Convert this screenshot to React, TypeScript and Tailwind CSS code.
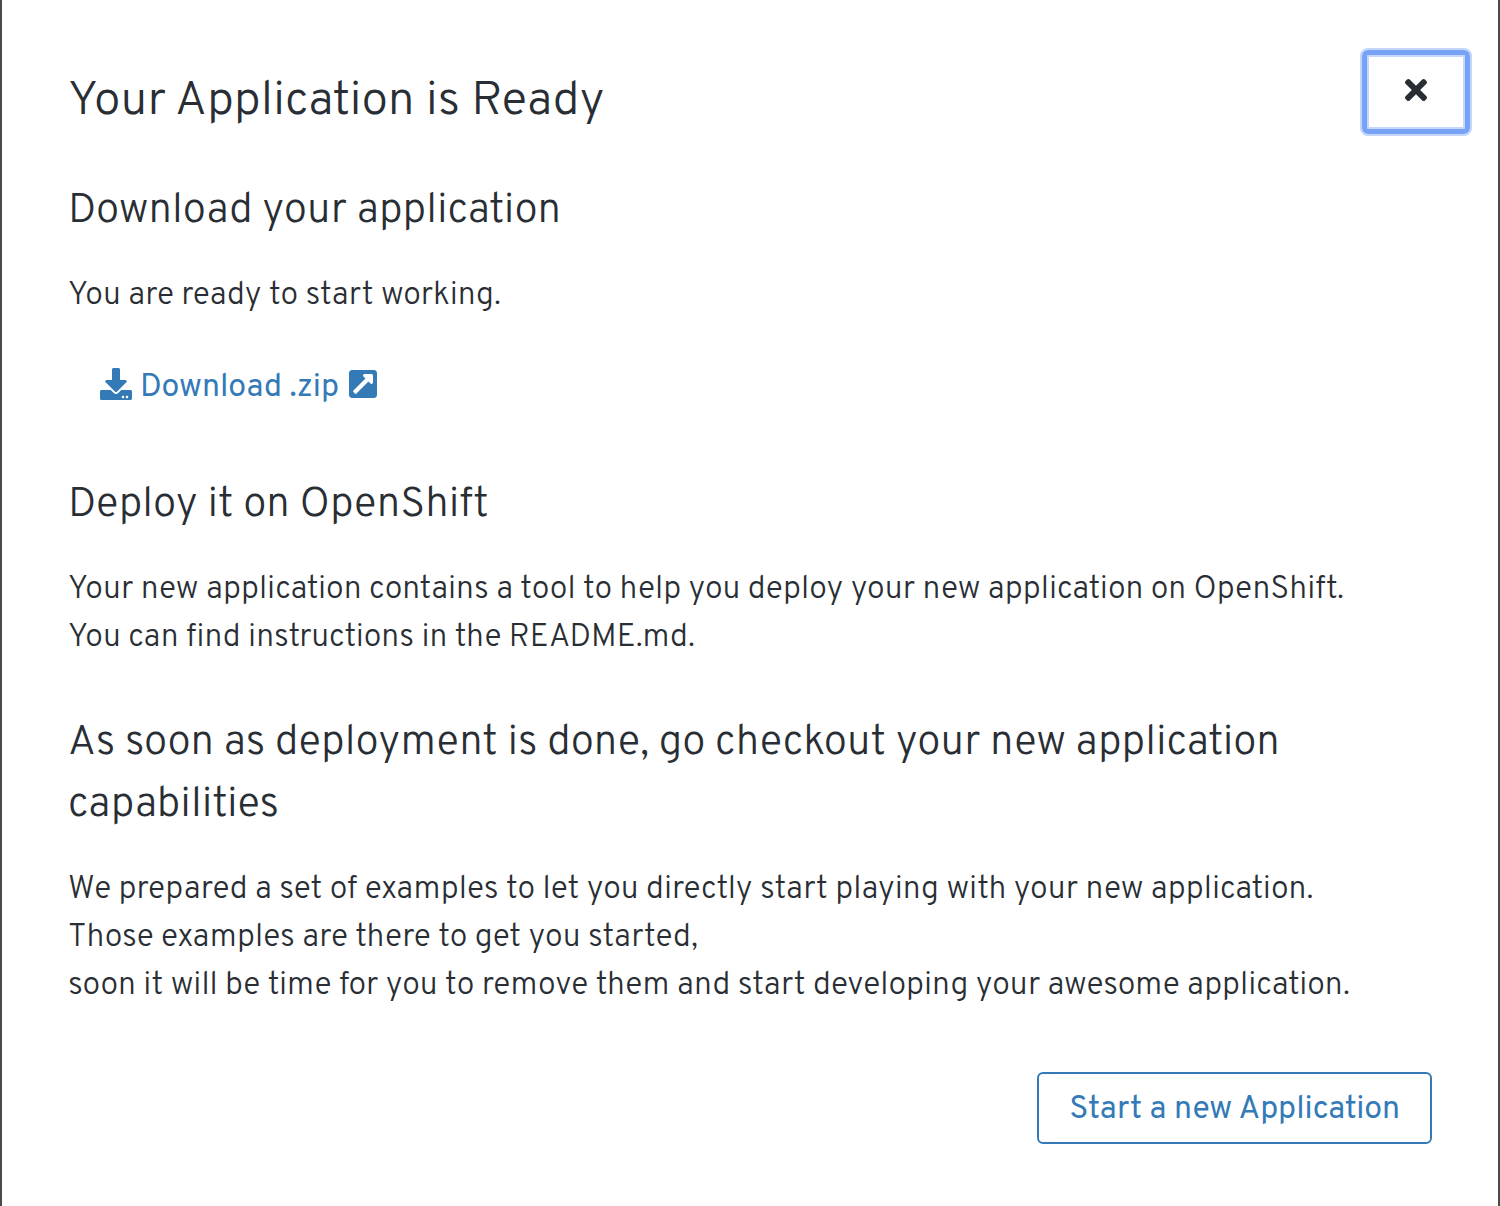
import type { ReactNode } from "react";
import { FaDownload, FaExternalLinkSquareAlt, FaTimes } from "react-icons/fa";

function Section({ title, children }: { title: string; children: ReactNode }) {
  return (
    <section>
      <h2 className="mb-[29px] text-[42px] leading-[62px]">{title}</h2>
      {children}
    </section>
  );
}

export default function App() {
  return (
    <div className="min-h-screen border-x-2 border-[#4a4a4c] bg-white font-['Overpass','Open_Sans',sans-serif] text-[32px] leading-[48px] font-light text-[#292e34]">
      <main role="dialog" aria-labelledby="dialog-title" className="px-[66px] pt-[50px] pb-[62px]">
        <header className="-mr-[38px] flex items-start justify-between">
          <h1 id="dialog-title" className="pt-4 text-5xl leading-[72px]">
            Your Application is Ready
          </h1>
          <button
            type="button"
            aria-label="Close"
            className="flex h-[84px] w-[108px] items-center justify-center rounded-md border-5 border-[#76a2f7] pb-1 shadow-[0_0_0_2px_#c5d6fb,inset_0_0_0_2px_#c5d6fb]"
          >
            <FaTimes size={32} />
          </button>
        </header>

        <div className="mt-[43px]">
          <Section title="Download your application">
            <p>You are ready to start working.</p>
            <a href="#" className="mt-11 ml-8 flex w-fit items-center gap-2 font-normal text-[#337ab7]">
              <FaDownload size={32} className="mb-2" />
              Download .zip
              <FaExternalLinkSquareAlt size={32} className="mb-2" />
            </a>
          </Section>
        </div>

        <div className="mt-[63px]">
          <Section title="Deploy it on OpenShift">
            <p>
              Your new application contains a tool to help you deploy your new application on OpenShift.
              <br />
              You can find instructions in the README.md.
            </p>
          </Section>
        </div>

        <div className="mt-[51px]">
          <Section title="As soon as deployment is done, go checkout your new application capabilities">
            <p>
              We prepared a set of examples to let you directly start playing with your new application.
              <br />
              Those examples are there to get you started,
              <br />
              soon it will be time for you to remove them and start developing your awesome application.
            </p>
          </Section>
        </div>

        <footer className="mt-[62px] flex justify-end">
          <button
            type="button"
            className="h-[72px] rounded-md border-2 border-[#337ab7] px-[30px] pt-1 font-normal text-[#337ab7]"
          >
            Start a new Application
          </button>
        </footer>
      </main>
    </div>
  );
}
